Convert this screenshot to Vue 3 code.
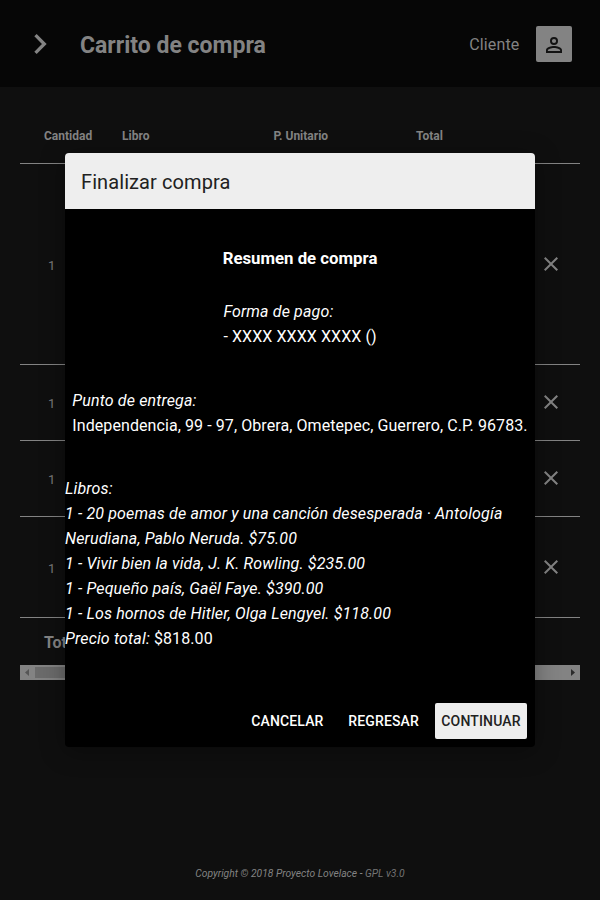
<script setup>
const rows = [
  { qty: 1, height: 201 },
  { qty: 1, height: 76 },
  { qty: 1, height: 76 },
  { qty: 1, height: 101 },
]
const rowStyle = ({ height }) => ({
  height: height + 'px',
  paddingTop: Math.floor((height - 25) / 2) + 'px',
})
const books = [
  '20 poemas de amor y una canción desesperada · Antología Nerudiana, Pablo Neruda. $75.00',
  'Vivir bien la vida, J. K. Rowling. $235.00',
  'Pequeño país, Gaël Faye. $390.00',
  'Los hornos de Hitler, Olga Lengyel. $118.00',
]
</script>

<template>
  <div class="page">
    <header class="bar">
      <svg class="chevron" viewBox="0 0 24 24"><path d="M8.59 16.59 13.17 12 8.59 7.41 10 6l6 6-6 6-1.41-1.41z" /></svg>
      <h1>Carrito de compra</h1>
      <span class="role">Cliente</span>
      <button class="user">
        <svg viewBox="0 0 24 24"><path d="M12 4a4 4 0 0 1 4 4 4 4 0 0 1-4 4 4 4 0 0 1-4-4 4 4 0 0 1 4-4m0 1.900A2.100 2.100 0 1 0 12 10.100 2.100 2.100 0 0 0 12 5.900M12 13c2.670 0 8 1.330 8 4v3H4v-3c0-2.670 5.330-4 8-4m0 1.900c-2.970 0-6.100 1.460-6.100 2.100v1.100h12.200V17c0-.640-3.130-2.100-6.100-2.100z" /></svg>
      </button>
    </header>

    <main class="cart">
      <div class="row head">
        <span>Cantidad</span><span>Libro</span><span>P. Unitario</span><span>Total</span>
      </div>
      <div v-for="(row, i) in rows" :key="i" class="row item" :style="rowStyle(row)">
        <span class="qty">{{ row.qty }}</span>
        <svg class="remove" viewBox="0 0 24 24"><path d="M19 6.410 17.590 5 12 10.590 6.410 5 5 6.410 10.590 12 5 17.590 6.410 19 12 13.410 17.590 19 19 17.590 13.410 12z" /></svg>
      </div>
      <div class="total">Total</div>
      <div class="scroll">
        <svg class="arrow off" viewBox="0 0 15 15"><path d="M9 4v7L5 7.500z" /></svg>
        <i class="thumb"></i>
        <svg class="arrow" viewBox="0 0 15 15"><path d="M6 4v7l4-3.500z" /></svg>
      </div>
    </main>

    <footer><span>Copyright © 2018 Proyecto Lovelace - </span><span class="license">GPL v3.0</span></footer>

    <div class="overlay">
      <section class="dialog">
        <div class="title">Finalizar compra</div>
        <div class="body">
          <h2>Resumen de compra</h2>
          <div class="block pay"><em>Forma de pago:</em><br />- XXXX XXXX XXXX ()</div>
          <div class="block place"><em>Punto de entrega:</em><br />Independencia, 99 - 97, Obrera, Ometepec, Guerrero, C.P. 96783.</div>
          <div class="block books">
            <em>Libros:</em>
            <em v-for="book in books" :key="book">1 - {{ book }}</em>
            <span><em class="inline">Precio total:</em> $818.00</span>
          </div>
        </div>
        <div class="actions">
          <button>CANCELAR</button>
          <button>REGRESAR</button>
          <button class="primary">CONTINUAR</button>
        </div>
      </section>
    </div>
  </div>
</template>

<style>
body {
  background: #0f0f0f;
}
</style>

<style scoped>
.page {
  position: relative;
  display: flex;
  flex-direction: column;
  height: 900px;
  overflow: hidden;
  font-family: Roboto, sans-serif;
  font-size: 16px;
  color: #838383;
  background: #0f0f0f;
}
.page * {
  box-sizing: border-box;
}
.bar {
  display: flex;
  align-items: center;
  height: 87px;
  padding: 0 28px 0 20px;
  background: #060606;
}
.chevron {
  width: 40px;
  height: 40px;
  margin-top: 1px;
  fill: #838383;
}
h1 {
  margin: 4px 0 0 20px;
  font-size: 23px;
  line-height: 30px;
  font-weight: 700;
}
.role {
  margin: 2px 16.500px 0 auto;
  letter-spacing: 0.150px;
}
button {
  font-family: inherit;
}
.user {
  width: 36px;
  height: 36px;
  padding: 7px 6px 5px;
  margin-top: 1px;
  border: 0;
  border-radius: 2px;
  background: #838383;
}
.user svg {
  display: block;
  width: 24px;
  height: 24px;
  fill: #131313;
}
.cart {
  padding: 21px 20px 0;
}
.row {
  border-bottom: 1px solid #838383;
}
.head {
  display: grid;
  grid-template-columns: 78px 151.500px 142.500px 1fr;
  height: 56px;
  padding-left: 24px;
  font-size: 12px;
  font-weight: 700;
  line-height: 56px;
}
.item {
  display: flex;
  align-items: flex-start;
  justify-content: space-between;
  padding: 0 17px 0 28px;
  font-size: 13px;
  line-height: 24px;
}
.qty {
  padding-top: 2px;
  color: #7a7a7a;
}
.remove {
  width: 24px;
  height: 24px;
  fill: #838383;
}
.total {
  height: 47px;
  padding-left: 24px;
  font-weight: 700;
  line-height: 49px;
}
.scroll {
  display: flex;
  height: 15px;
  background: #838383;
}
.arrow {
  width: 15px;
  height: 15px;
  fill: #2b2b2b;
}
.off {
  fill: #565656;
}
.thumb {
  flex: 1;
  margin: 2px 130px 2px 0;
  background: #6b6b6b;
}
footer {
  margin: auto 0 19px;
  font-size: 10.300px;
  font-style: italic;
  line-height: 14px;
  text-align: center;
  white-space: pre;
}
.license {
  color: #747474;
}
.overlay {
  position: absolute;
  inset: 0;
  display: flex;
  align-items: center;
  justify-content: center;
}
.dialog {
  display: flex;
  flex-direction: column;
  width: 470px;
  height: 594px;
  border-radius: 4px;
  overflow: hidden;
  background: #000;
  color: #fff;
  box-shadow: 0 4px 24px rgba(0, 0, 0, 0.35);
}
.title {
  height: 56px;
  padding: 1px 16px 0;
  font-size: 20px;
  line-height: 56px;
  letter-spacing: 0.090px;
  color: #212121;
  background: #eee;
}
.body {
  display: flex;
  flex-direction: column;
  align-items: center;
  flex: 1;
  padding-top: 37px;
  line-height: 25px;
}
h2 {
  margin: 0 0 28px;
  font-size: 16.800px;
  font-weight: 700;
  line-height: 25px;
}
.block {
  letter-spacing: 0.080px;
  white-space: nowrap;
}
.block em {
  letter-spacing: 0.145px;
}
.pay {
  margin-bottom: 39px;
}
.place {
  margin-bottom: 38px;
}
.books {
  width: 100%;
  white-space: normal;
}
.books em {
  display: block;
}
.books .inline {
  display: inline;
  letter-spacing: 0.170px;
}
.actions {
  display: flex;
  justify-content: flex-end;
  height: 44px;
  padding: 0 8px 8px;
}
.actions button {
  height: 36px;
  margin-left: 12.700px;
  padding: 0 6px;
  border: 0;
  border-radius: 2px;
  font-size: 14px;
  font-weight: 500;
  letter-spacing: 0.150px;
  color: #fff;
  background: none;
}
.actions .primary {
  width: 92px;
  margin-left: 10px;
  color: #212121;
  background: #eee;
}
</style>
